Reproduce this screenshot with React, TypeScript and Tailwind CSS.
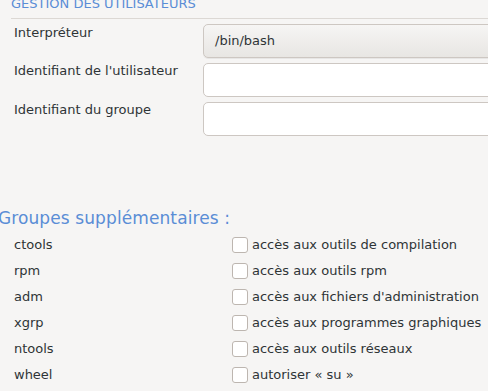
import React from "react";

const groups = [
  { name: "ctools", label: "accès aux outils de compilation" },
  { name: "rpm", label: "accès aux outils rpm" },
  { name: "adm", label: "accès aux fichiers d'administration" },
  { name: "xgrp", label: "accès aux programmes graphiques" },
  { name: "ntools", label: "accès aux outils réseaux" },
  { name: "wheel", label: "autoriser « su »" },
];

export default function App() {
  return (
    <div className="w-[488px] h-[391px] overflow-hidden bg-[#f6f5f4] text-[#2e3436] font-['DejaVu_Sans',sans-serif] text-[13px] leading-[16px]">
      {/* Gestion des utilisateurs */}
      <div className="ml-[11px] mt-[-4px] text-[#5a8dd6] whitespace-nowrap">GESTION DES UTILISATEURS</div>
      <div className="ml-[11px] mt-[6px] border-t border-[#dcd8d4]" />

      <div className="mt-[5px] grid grid-cols-[203px_320px] gap-y-[5px] items-start">
        <div className="pl-[14px] pt-[1px]">Interpréteur</div>
        <div className="h-[34px] rounded-[5px] border border-[#cdc7c2] bg-gradient-to-b from-[#f6f5f4] to-[#e8e6e3] pl-[11px] flex items-center shadow-[0_1px_0_rgba(0,0,0,0.06)]">
          /bin/bash
        </div>

        <div className="pl-[14px]">Identifiant de l'utilisateur</div>
        <div className="h-[34px] rounded-[5px] border border-[#cdc7c2] bg-white" />

        <div className="pl-[14px]">Identifiant du groupe</div>
        <div className="h-[34px] rounded-[5px] border border-[#cdc7c2] bg-white" />
      </div>

      {/* Groupes supplémentaires */}
      <div className="mt-[72px] ml-[-2px] text-[17px] leading-[20px] tracking-[0.1px] text-[#5a8dd6] whitespace-nowrap">
        Groupes supplémentaires :
      </div>

      <div className="mt-[9px] flex flex-col gap-[10px]">
        {groups.map((g) => (
          <div key={g.name} className="grid grid-cols-[232px_1fr] items-center h-[16px]">
            <div className="pl-[14px]">{g.name}</div>
            <label className="flex items-center gap-[4px] whitespace-nowrap">
              <span className="w-[16px] h-[16px] rounded-[3px] border border-[#bdb6b0] bg-white" />
              {g.label}
            </label>
          </div>
        ))}
      </div>
    </div>
  );
}
